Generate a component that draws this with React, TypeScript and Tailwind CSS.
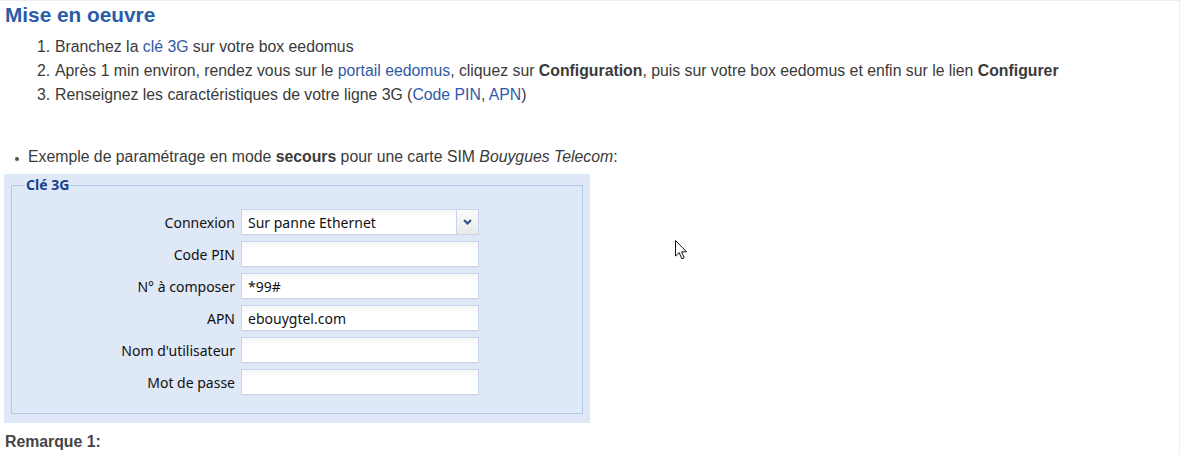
import React from 'react'

const body = { fontFamily: '"Liberation Sans", Arial, sans-serif' }
const ext = { fontFamily: '"Noto Sans", "DejaVu Sans", sans-serif' }

const rows: { label: string; value?: string; select?: boolean }[] = [
  { label: 'Connexion', value: 'Sur panne Ethernet', select: true },
  { label: 'Code PIN' },
  { label: 'N° à composer', value: '*99#' },
  { label: 'APN', value: 'ebouygtel.com' },
  { label: "Nom d'utilisateur" },
  { label: 'Mot de passe' },
]

function Link({ children }: { children: React.ReactNode }) {
  return <span className="text-[#2f5aa8]">{children}</span>
}

function Field({ value, select }: { value?: string; select?: boolean }) {
  return (
    <div className="relative flex h-[26px] w-[238px] items-center border border-[#c5d4ea] bg-gradient-to-b from-[#f6f6f6] to-white to-[30%]">
      <span className="pl-[6px] text-[14px] text-[#111]">{value}</span>
      {select && (
        <div className="absolute right-0 top-0 flex h-full w-[22px] items-center justify-center border-l border-[#c5d4ea] bg-gradient-to-b from-[#fbfbfb] to-[#e9e9e9]">
          <svg width="9" height="6" viewBox="0 0 9 6">
            <path d="M1 1 L4.5 4.5 L8 1" fill="none" stroke="#2d4f8c" strokeWidth="2" />
          </svg>
        </div>
      )}
    </div>
  )
}

export default function App() {
  return (
    <div className="relative h-[454px] w-[1180px] overflow-hidden border-r border-t border-[#eeeeee] bg-white text-[15.8px] text-[#3a3a3a]" style={body}>
      <h2 className="pl-[5px] pt-[3px] text-[20.8px] font-bold leading-[22px] text-[#2a5ca8]">Mise en oeuvre</h2>

      <ol className="mt-[9px] flex flex-col leading-[24px]">
        <li className="flex pl-[37px]">
          <span className="w-[18px]">1.</span>
          <span>
            Branchez la <Link>clé 3G</Link> sur votre box eedomus
          </span>
        </li>
        <li className="flex pl-[37px]">
          <span className="w-[18px]">2.</span>
          <span>
            Après 1 min environ, rendez vous sur le <Link>portail eedomus</Link>, cliquez sur <b>Configuration</b>, puis sur
            votre box eedomus et enfin sur le lien <b>Configurer</b>
          </span>
        </li>
        <li className="flex pl-[37px]">
          <span className="w-[18px]">3.</span>
          <span>
            Renseignez les caractéristiques de votre ligne 3G (<Link>Code PIN</Link>, <Link>APN</Link>)
          </span>
        </li>
      </ol>

      <div className="mt-[38px] flex items-center pl-[15px] leading-[24px]">
        <span className="mr-[9px] mt-[3px] h-[4px] w-[4px] rounded-full bg-[#555]" />
        <span>
          Exemple de paramétrage en mode <b>secours</b> pour une carte SIM <i>Bouygues Telecom</i>:
        </span>
      </div>

      <div className="ml-[4px] mt-[5px] h-[249px] w-[586px] bg-[#dfe8f6] px-[7px] pb-[9px] pt-[4px]" style={ext}>
        <fieldset className="h-full border border-[#b5c8e6] px-[13px]">
          <legend className="px-[1px] text-[14px] font-bold leading-[14px] text-[#15428b]">Clé 3G</legend>
          <div className="mt-[17px] flex flex-col gap-[6px]">
            {rows.map((r) => (
              <div key={r.label} className="flex items-center">
                <span className="w-[216px] pr-[6px] text-right text-[14px] text-[#111]">{r.label}</span>
                <Field value={r.value} select={r.select} />
              </div>
            ))}
          </div>
        </fieldset>
      </div>

      <div className="mt-[9px] pl-[5px] font-bold leading-[20px] text-[#444]">Remarque 1:</div>

      <svg className="absolute left-[675px] top-[239px]" width="13" height="21" viewBox="0 0 13 21">
        <path d="M0.5 0.5 L0.5 16 L4.2 12.6 L6.8 18.8 L9.2 17.8 L6.6 11.8 L11.5 11.8 Z" fill="#fff" stroke="#111" strokeWidth="1" />
      </svg>
    </div>
  )
}
